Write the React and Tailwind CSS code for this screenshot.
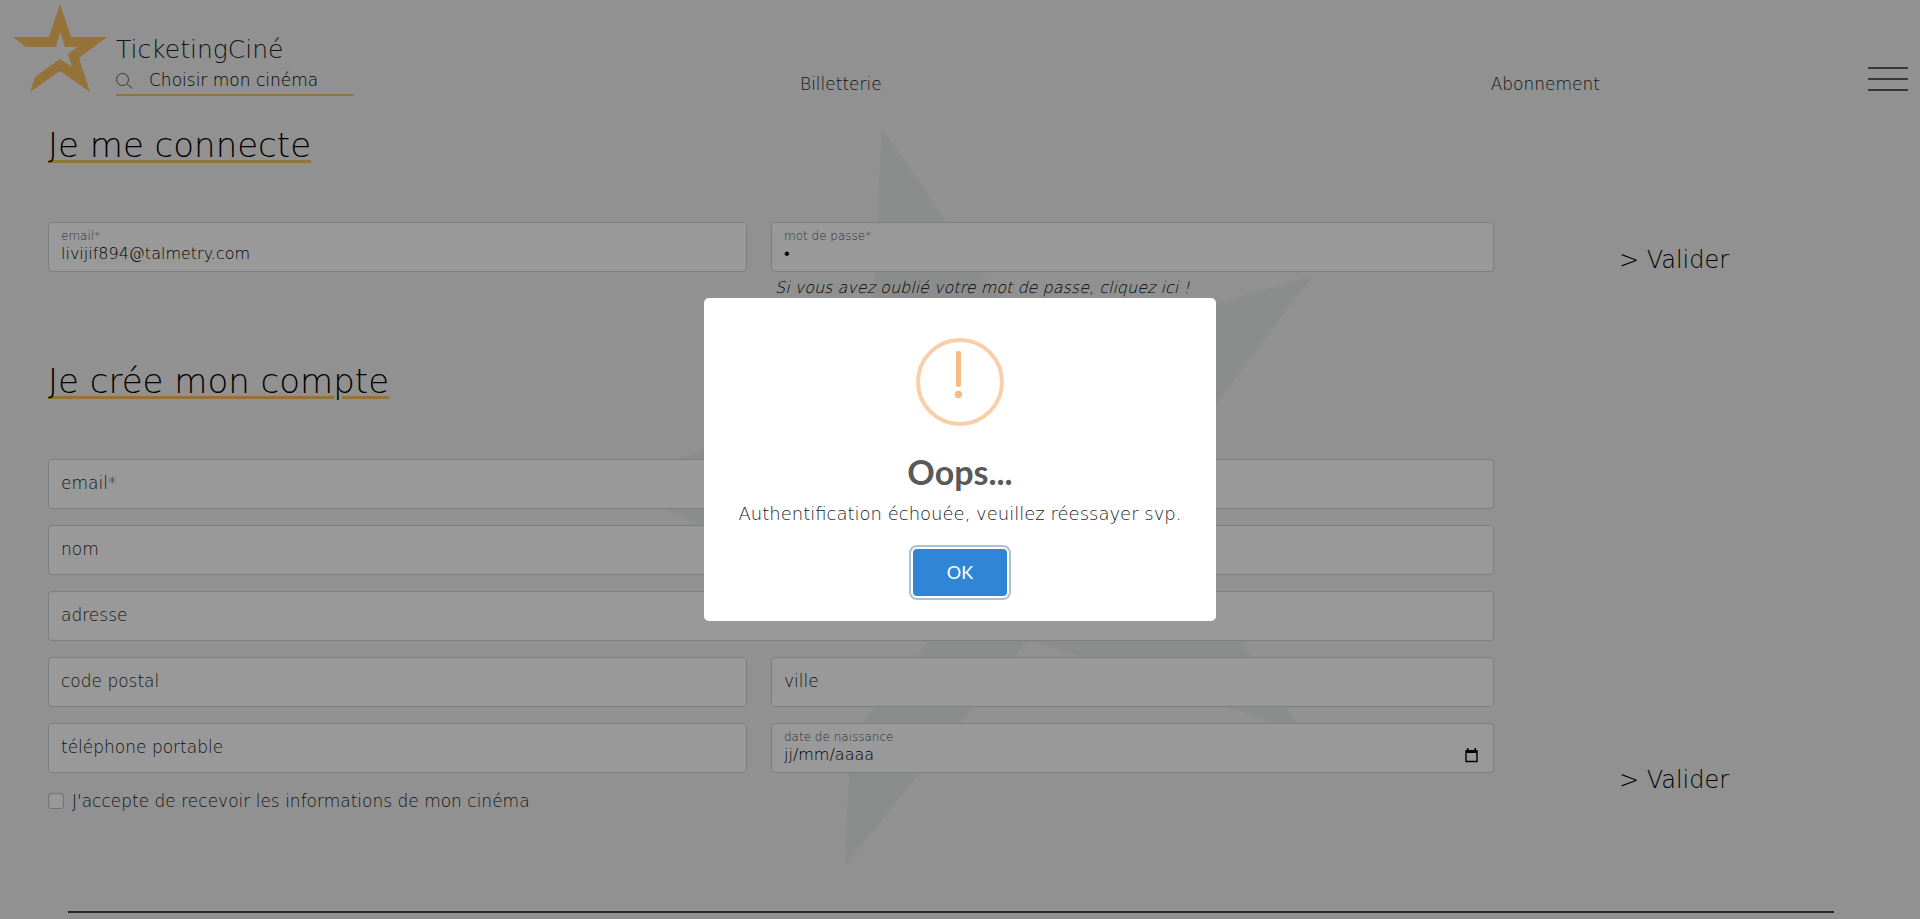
const STAR =
  '60,4 71,37 107,37 79,58 90,92 60,71 30,92 35,77 60,59 72,67 68,54 78,47 65,47 60,32 56,47 26,47 13,37 49,37';

function Field({ id, label, type = 'text', value, className = '' }) {
  const filled = value !== undefined;
  return (
    <div className={`relative ${className}`}>
      <input
        id={id}
        type={type}
        defaultValue={value}
        className="block h-[50px] w-full rounded border border-[#ced4da] bg-white px-3 pb-px pt-[14px] text-base text-black outline-none"
      />
      <label
        htmlFor={id}
        className={
          filled
            ? 'pointer-events-none absolute left-[13px] top-1 text-xs leading-5 text-[#212529]/85'
            : 'pointer-events-none absolute left-[13px] top-3 text-[17px] leading-6 text-[#212529]'
        }
      >
        {label}
      </label>
    </div>
  );
}

function Header() {
  return (
    <header className="flex h-[100px] items-start">
      <a href="#accueil" aria-label="Accueil" className="shrink-0">
        <svg width="116" height="96" viewBox="0 0 116 96" fill="#f7bf62">
          <polygon points={STAR} />
        </svg>
      </a>
      <div className="w-[238px] shrink-0 pt-8">
        <a href="#accueil" className="block text-[25px] leading-9 text-[#212529]">
          TicketingCiné
        </a>
        <div className="flex h-7 items-center gap-4 border-b-2 border-[#f7bf62]">
          <svg width="17" height="16" viewBox="0 0 17 16" fill="none" stroke="#5c6065" strokeWidth="1" className="shrink-0">
            <circle cx="6.5" cy="6.5" r="6" />
            <path d="M11 11l5.500 4.500" />
          </svg>
          <input
            aria-label="Choisir mon cinéma"
            placeholder="Choisir mon cinéma"
            className="w-full min-w-0 bg-transparent text-[17px] text-[#212529] outline-none placeholder:text-black"
          />
        </div>
      </div>
      <nav className="flex flex-1 justify-between pl-[446px] pr-[268px] pt-[72px] text-[17px] leading-6 text-[#212529]">
        <a href="#billetterie">Billetterie</a>
        <a href="#abonnement">Abonnement</a>
      </nav>
      <button type="button" aria-label="Menu" className="mr-3 mt-[67px] flex w-10 shrink-0 flex-col gap-[9px]">
        <span className="h-[2px] w-full bg-[#5a5d60]" />
        <span className="h-[2px] w-full bg-[#5a5d60]" />
        <span className="h-[2px] w-full bg-[#5a5d60]" />
      </button>
    </header>
  );
}

function Heading({ children }) {
  return (
    <h2 className="text-[34px] leading-[48px] text-black underline decoration-[#f7bf62] decoration-[3px] underline-offset-[3px]">
      <span className="[text-decoration-skip-ink:none]">J</span>
      {children}
    </h2>
  );
}

function Submit() {
  return (
    <button type="submit" className="text-2xl leading-9 text-black">
      &gt; Valider
    </button>
  );
}

const GRID = 'grid grid-cols-[699fr_723fr_312fr] gap-x-6';

export default function App() {
  return (
    <div className="relative min-h-screen overflow-hidden bg-[#f2f2f2] font-['DejaVu_Sans',sans-serif] font-extralight">
      <div className="pointer-events-none absolute inset-x-0 top-[109px] flex justify-center pl-[62px]">
        <svg width="800" height="800" viewBox="0 0 800 800" fill="#e7ebe9" aria-hidden="true">
          <polygon points={STAR} transform="translate(400 400) rotate(-16) scale(7.95) translate(-60 -54)" />
        </svg>
      </div>

      <div className="relative">
        <Header />
        <main className="pl-12 pr-[90px] pt-[21px]">
          <Heading>e me connecte</Heading>
          <form className={`${GRID} mt-[53px]`}>
            <Field id="login-email" label="email*" type="email" value="livijif894@talmetry.com" />
            <div>
              <Field id="login-pass" label="mot de passe*" type="password" value="x" />
              <a
                href="#oubli"
                className="block pl-1 pt-1 font-['DejaVu_Sans_Light','DejaVu_Sans',sans-serif] text-base italic leading-6 text-black"
              >
                Si vous avez oublié votre mot de passe, cliquez ici !
              </a>
            </div>
            <div className="flex items-start justify-center pt-5">
              <Submit />
            </div>
          </form>

          <div className="pt-[57px]">
            <Heading>e crée mon compte</Heading>
          </div>
          <form className={`${GRID} mt-[54px]`}>
            <div className="col-span-2 grid grid-cols-[699fr_723fr] gap-x-6 gap-y-4">
              <Field id="email" label="email*" type="email" />
              <Field id="pass" label="mot de passe*" type="password" />
              <Field id="nom" label="nom" />
              <Field id="prenom" label="prénom" />
              <Field id="adresse" label="adresse" className="col-span-2" />
              <Field id="cp" label="code postal" />
              <Field id="ville" label="ville" />
              <Field id="tel" label="téléphone portable" />
              <div className="relative">
                <Field id="naissance" label="date de naissance" value="jj/mm/aaaa" />
                <button type="button" aria-label="Ouvrir le calendrier" className="absolute right-4 top-[25px]">
                  <svg width="13" height="15" viewBox="0 0 13 15" fill="none">
                    <path d="M1 3h11v10.500H1z" stroke="#000" strokeWidth="1.400" />
                    <path d="M1 2h11v3H1zM2 0h1.500v2H2zM9.500 0H11v2H9.500z" fill="#000" />
                  </svg>
                </button>
              </div>
              <label className="col-span-2 flex items-center gap-2 text-[17px] leading-6 text-[#212529]">
                <input
                  type="checkbox"
                  className="size-4 appearance-none rounded border border-black/25 bg-white"
                />
                J'accepte de recevoir les informations de mon cinéma
              </label>
            </div>
            <div className="flex items-end justify-center pb-[15px]">
              <Submit />
            </div>
          </form>
        </main>
        <hr className="ml-[68px] mr-[86px] mt-[98px] border-t-2 border-[#3c4542]" />
      </div>

      <div className="fixed inset-0 flex items-center justify-center bg-black/40">
        <div role="dialog" aria-modal="true" aria-labelledby="alert-title" className="flex w-[512px] flex-col items-center rounded-[5px] bg-white pb-[25px] pt-10">
          <svg width="88" height="88" viewBox="0 0 88 88" fill="none">
            <circle cx="44" cy="44" r="42" stroke="#facea8" strokeWidth="4" />
            <rect x="40" y="13" width="5" height="36" rx="2" fill="#f8bb86" />
            <circle cx="42.500" cy="56.500" r="3.700" fill="#f8bb86" />
          </svg>
          <h2 id="alert-title" className="mt-[22px] font-['Lato',sans-serif] text-[34px] font-bold leading-[48px] text-[#595959]">
            Oops...
          </h2>
          <p className="mt-1 text-lg leading-7 text-[#222222]">Authentification échouée, veuillez réessayer svp.</p>
          <button
            type="button"
            className="mt-[21px] h-[47px] w-[94px] rounded bg-[#3085d6] pb-0.5 font-['Lato',sans-serif] text-lg font-normal text-white shadow-[0_0_0_2px_#fff,0_0_0_4px_rgba(50,100,150,0.4)]"
          >
            OK
          </button>
        </div>
      </div>
    </div>
  );
}
